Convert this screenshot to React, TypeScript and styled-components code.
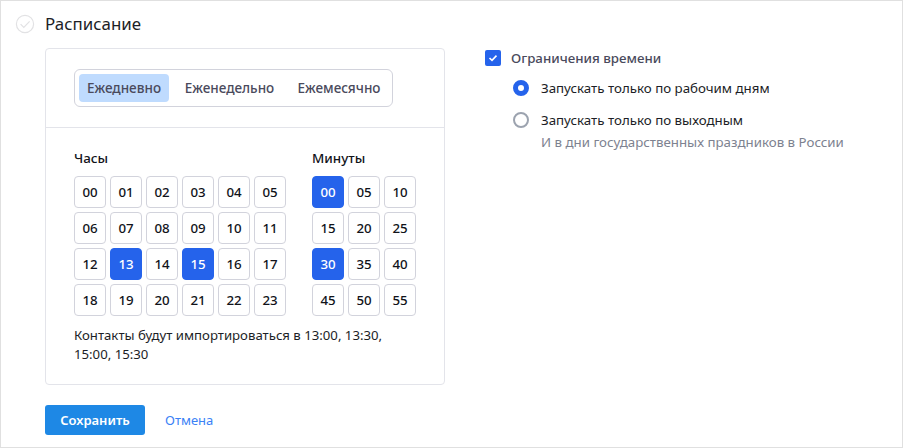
import React from "react";
import styled, { createGlobalStyle } from "styled-components";

const Global = createGlobalStyle`
  html, body { margin: 0; padding: 0; background: #fff; }
  body { font-family: "Noto Sans", "Open Sans", sans-serif; color: #11131a; }
  * { box-sizing: border-box; }
`;
const Page = styled.div`
  width: 903px; height: 448px; border: 1px solid #e0e0e0;
  display: flex; flex-direction: column; padding: 0 0 0 14px; overflow: hidden;
`;
const Header = styled.div`
  display: flex; align-items: center; gap: 10px; height: 47px; padding-bottom: 2px;
`;
const Title = styled.h2`
  margin: 0; font-size: 16.9px; font-weight: 400; line-height: 22px; color: #1c1e26;
`;
const Body = styled.div`
  display: flex; padding-left: 30px; gap: 40px;
`;
const Left = styled.div`
  width: 400px; display: flex; flex-direction: column;
`;
const Card = styled.div`
  height: 337px; border: 1px solid #e3e4ea; border-radius: 4px; display: flex; flex-direction: column;
`;
const CardTop = styled.div`
  height: 79px; padding: 20px 0 0 28px; border-bottom: 1px solid #e3e4ea;
`;
const Segment = styled.div`
  width: 319px; height: 38px; border: 1px solid #d2d3dc; border-radius: 6px; padding: 4px; display: flex; align-items: stretch;
`;
const SegItem = styled.div<{ $active?: boolean; $w: number }>`
  flex: none; width: ${p => p.$w}px; border-radius: 4px; display: flex; align-items: center; justify-content: center;
  font-size: 13.5px; font-weight: 500; color: #4a4a5c;
  background: ${p => (p.$active ? "#bfdbfe" : "transparent")};
`;
const CardBody = styled.div`
  padding: 21px 0 0 28px; display: flex; flex-direction: column;
`;
const Pickers = styled.div`
  display: flex; gap: 26px;
`;
const Picker = styled.div`
  display: flex; flex-direction: column; gap: 8px;
`;
const PickerLabel = styled.div`
  font-size: 13.4px; font-weight: 500; line-height: 19px; color: #11131a;
`;
const Grid = styled.div<{ $cols: number }>`
  display: grid; grid-template-columns: repeat(${p => p.$cols}, 32px); grid-auto-rows: 32px; gap: 4px;
`;
const Cell = styled.div<{ $on?: boolean }>`
  display: flex; align-items: center; justify-content: center; border-radius: 4px;
  font-size: 13.3px; font-weight: 500;
  border: 1px solid ${p => (p.$on ? "#2563eb" : "#d2d3dc")};
  background: ${p => (p.$on ? "#2563eb" : "#fff")};
  color: ${p => (p.$on ? "#fff" : "#11131a")};
`;
const Note = styled.div`
  margin-top: 10px; width: 330px; font-size: 13.2px; line-height: 19px; color: #1c1e26;
`;
const Actions = styled.div`
  display: flex; align-items: center; gap: 20px; margin-top: 20px;
`;
const Save = styled.button`
  width: 100px; height: 30px; border: 0; border-radius: 3px; background: #1e88e5; color: #fff;
  font: 600 13px "Noto Sans", sans-serif; padding: 0;
`;
const Cancel = styled.a`
  font-size: 13px; color: #3b82f6;
`;
const Right = styled.div`
  display: flex; flex-direction: column;
`;
const CheckRow = styled.div`
  display: flex; align-items: center; gap: 10px; height: 20px;
`;
const CheckBox = styled.span`
  width: 16px; height: 16px; border-radius: 2px; background: #2563eb; display: flex; align-items: center; justify-content: center;
`;
const CheckLabel = styled.span`
  font-size: 13.3px; font-weight: 500; color: #4a4a5c;
`;
const Options = styled.div`
  display: flex; flex-direction: column; padding: 10px 0 0 28px; gap: 12px;
`;
const Option = styled.div`
  display: grid; grid-template-columns: 16px 1fr; column-gap: 12px; align-items: center;
`;
const Radio = styled.span<{ $on?: boolean }>`
  width: 16px; height: 16px; border-radius: 50%;
  border: ${p => (p.$on ? "5px solid #2563eb" : "2px solid #9ca3af")};
  background: #fff;
`;
const OptionText = styled.span`
  font-size: 13.3px; line-height: 20px; color: #1c1e26;
`;
const Hint = styled.span`
  grid-column: 2; margin-top: 3px; font-size: 13.3px; line-height: 19px; color: #7d8290;
`;

const pad = (n: number) => String(n).padStart(2, "0");
const hours = Array.from({ length: 24 }, (_, i) => i);
const mins = Array.from({ length: 12 }, (_, i) => i * 5);

export default function App() {
  return (
    <Page>
      <Global />
      <Header>
        <svg width="20" height="20" viewBox="0 0 20 20" fill="none">
          <circle cx="10" cy="10" r="8.6" stroke="#e2e2e4" strokeWidth="1.2" />
          <path d="M5.6 10.2l3.2 3.2 5.8-6" stroke="#e2e2e4" strokeWidth="1.2" />
        </svg>
        <Title>Расписание</Title>
      </Header>
      <Body>
        <Left>
          <Card>
            <CardTop>
              <Segment>
                <SegItem $active $w={90}>Ежедневно</SegItem>
                <SegItem $w={121}>Еженедельно</SegItem>
                <SegItem $w={98}>Ежемесячно</SegItem>
              </Segment>
            </CardTop>
            <CardBody>
              <Pickers>
                <Picker>
                  <PickerLabel>Часы</PickerLabel>
                  <Grid $cols={6}>
                    {hours.map(h => <Cell key={h} $on={h === 13 || h === 15}>{pad(h)}</Cell>)}
                  </Grid>
                </Picker>
                <Picker>
                  <PickerLabel>Минуты</PickerLabel>
                  <Grid $cols={3}>
                    {mins.map(m => <Cell key={m} $on={m === 0 || m === 30}>{pad(m)}</Cell>)}
                  </Grid>
                </Picker>
              </Pickers>
              <Note>Контакты будут импортироваться в 13:00, 13:30, 15:00, 15:30</Note>
            </CardBody>
          </Card>
          <Actions>
            <Save>Сохранить</Save>
            <Cancel>Отмена</Cancel>
          </Actions>
        </Left>
        <Right>
          <CheckRow>
            <CheckBox>
              <svg width="10" height="8" viewBox="0 0 10 8" fill="none">
                <path d="M1.5 4l2.5 2.4L8.5 1.6" stroke="#fff" strokeWidth="1.6" />
              </svg>
            </CheckBox>
            <CheckLabel>Ограничения времени</CheckLabel>
          </CheckRow>
          <Options>
            <Option>
              <Radio $on />
              <OptionText>Запускать только по рабочим дням</OptionText>
            </Option>
            <Option>
              <Radio />
              <OptionText>Запускать только по выходным</OptionText>
              <Hint>И в дни государственных праздников в России</Hint>
            </Option>
          </Options>
        </Right>
      </Body>
    </Page>
  );
}
